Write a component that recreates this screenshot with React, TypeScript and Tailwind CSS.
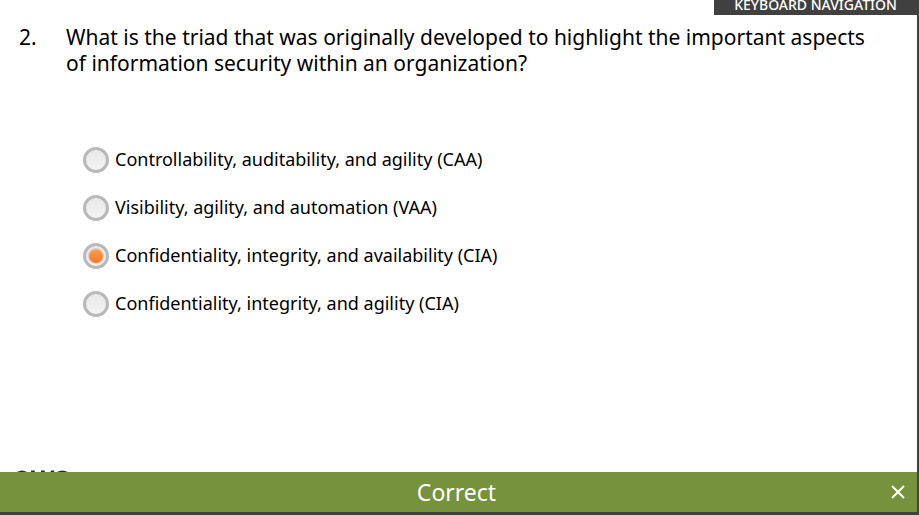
import { useState } from "react";

const options = [
  "Controllability, auditability, and agility (CAA)",
  "Visibility, agility, and automation (VAA)",
  "Confidentiality, integrity, and availability (CIA)",
  "Confidentiality, integrity, and agility (CIA)",
];

function AnswerOption({
  label,
  checked,
  onSelect,
}: {
  label: string;
  checked: boolean;
  onSelect: () => void;
}) {
  return (
    <label className="flex h-12 cursor-pointer items-center gap-[6px] text-lg">
      <span className="grid size-[26px] shrink-0 place-items-center">
        <input
          type="radio"
          name="answer"
          checked={checked}
          onChange={onSelect}
          className="peer col-start-1 row-start-1 size-[26px] appearance-none rounded-full border-[3px] border-[#b9b9b9] bg-linear-to-b from-[#e9e9e9] to-[#f4f4f4]"
        />
        <span className="pointer-events-none col-start-1 row-start-1 hidden size-[14px] rounded-full bg-linear-to-b from-[#fba04c] to-[#ee7630] ring-1 ring-[#dcd0c8] peer-checked:block" />
      </span>
      <span className="pb-[2px]">{label}</span>
    </label>
  );
}

export default function App() {
  const [selected, setSelected] = useState(2);
  const [open, setOpen] = useState(true);

  return (
    <div className="flex min-h-screen flex-col bg-[#404040] pr-[2px] pb-[3px] font-['Noto_Sans',sans-serif] text-black">
      <main className="flex grow flex-col bg-white">
        <div className="flex h-[15px] justify-end overflow-hidden">
          <button className="flex h-[15px] w-[203px] items-end justify-center bg-[#404040] text-sm leading-5 font-medium text-white">
            KEYBOARD NAVIGATION
          </button>
        </div>

        <fieldset className="grow">
          <legend className="flex pt-[9px] pr-8 pl-[19px] text-[21px] leading-[26px]">
            <span className="w-[47px] shrink-0">2.</span>
            <span className="max-w-[810px]">
              What is the triad that was originally developed to highlight the important aspects of
              information security within an organization?
            </span>
          </legend>
          <div className="pt-[60px] pl-[83px]">
            {options.map((label, i) => (
              <AnswerOption
                key={label}
                label={label}
                checked={selected === i}
                onSelect={() => setSelected(i)}
              />
            ))}
          </div>
        </fieldset>

        <div className="h-[2px] overflow-hidden pl-4">
          <svg width="54" height="2" viewBox="0 0 54 2" fill="#232f3e" aria-label="aws">
            <path d="M1 2Q6-1 11 2ZM15 .6h3.500l.5 1.400h-4ZM25 .6h3.500l.5 1.400h-4ZM35 .6h3.500l-.5 1.400h-3.500ZM41 2Q46-1 52 2Z" />
          </svg>
        </div>
      </main>

      {open && (
        <div
          role="status"
          className="grid h-10 grid-cols-[1fr_auto_1fr] items-center bg-[#76923c] pr-1 text-white"
        >
          <span className="col-start-2 text-[23px] leading-8">Correct</span>
          <button
            aria-label="Close"
            onClick={() => setOpen(false)}
            className="mr-2 justify-self-end"
          >
            <svg width="14" height="14" viewBox="0 0 14 14" stroke="white" strokeWidth="2">
              <path d="M1 1 13 13M13 1 1 13" />
            </svg>
          </button>
        </div>
      )}
    </div>
  );
}
